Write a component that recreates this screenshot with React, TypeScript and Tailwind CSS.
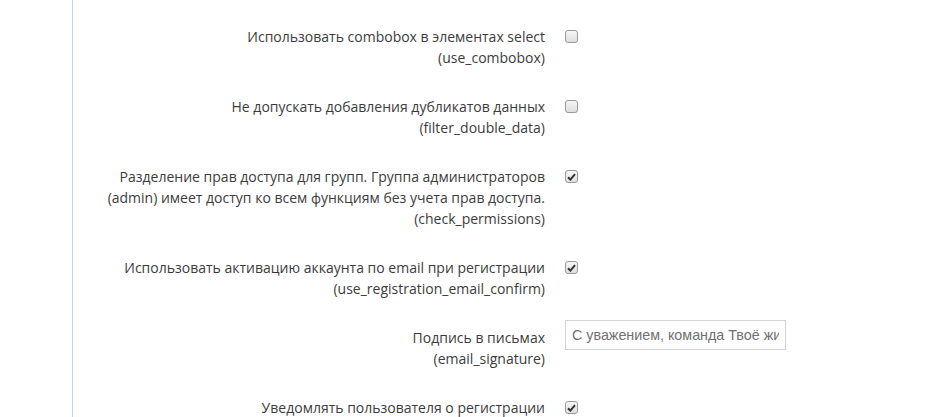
import React from 'react';

interface Row {
  label: string[];
  name: string;
  kind: 'checkbox' | 'text';
  checked?: boolean;
  value?: string;
}

const rows: Row[] = [
  { label: ['Использовать combobox в элементах select'], name: 'use_combobox', kind: 'checkbox' },
  { label: ['Не допускать добавления дубликатов данных'], name: 'filter_double_data', kind: 'checkbox' },
  {
    label: [
      'Разделение прав доступа для групп. Группа администраторов',
      '(admin) имеет доступ ко всем функциям без учета прав доступа.',
    ],
    name: 'check_permissions',
    kind: 'checkbox',
    checked: true,
  },
  {
    label: ['Использовать активацию аккаунта по email при регистрации'],
    name: 'use_registration_email_confirm',
    kind: 'checkbox',
    checked: true,
  },
  {
    label: ['Подпись в письмах'],
    name: 'email_signature',
    kind: 'text',
    value: 'С уважением, команда Твоё жилье',
  },
  { label: ['Уведомлять пользователя о регистрации'], name: 'notify_registration', kind: 'checkbox', checked: true },
];

const Checkbox: React.FC<{ checked?: boolean }> = ({ checked }) => (
  <span className="mt-[11px] flex h-[13px] w-[13px] items-center justify-center rounded-[3px] border border-[#9a9a9a] bg-gradient-to-b from-[#f6f6f6] to-[#dedede]">
    {checked && (
      <svg width="9" height="8" viewBox="0 0 9 8">
        <path d="M1 4.2 L3.4 6.6 L8 1.2" fill="none" stroke="#333" strokeWidth="2" />
      </svg>
    )}
  </span>
);

export default function App() {
  return (
    <div className="h-[417px] w-[926px] overflow-hidden bg-white" style={{ fontFamily: '"Open Sans", sans-serif' }}>
      <div className="ml-[72px] h-full border-l border-[#c5d5e6] pt-[19px]">
        {rows.map((r) => (
          <div key={r.name} className="mb-[21px] flex">
            <div className="w-[472px] pt-[7px] text-right text-[14px] leading-[21px] text-[#3c3c3c]">
              {r.label.map((l) => (
                <div key={l}>{l}</div>
              ))}
              <div>({r.name})</div>
            </div>
            <div className="ml-[20px]">
              {r.kind === 'checkbox' ? (
                <Checkbox checked={r.checked} />
              ) : (
                <input
                  readOnly
                  value={r.value}
                  className="h-[30px] w-[221px] border border-[#d4d4d4] px-[6px] text-[14.3px] text-[#707070] outline-none"
                  style={{ fontFamily: '"Liberation Sans", Arial, sans-serif' }}
                />
              )}
            </div>
          </div>
        ))}
      </div>
    </div>
  );
}
